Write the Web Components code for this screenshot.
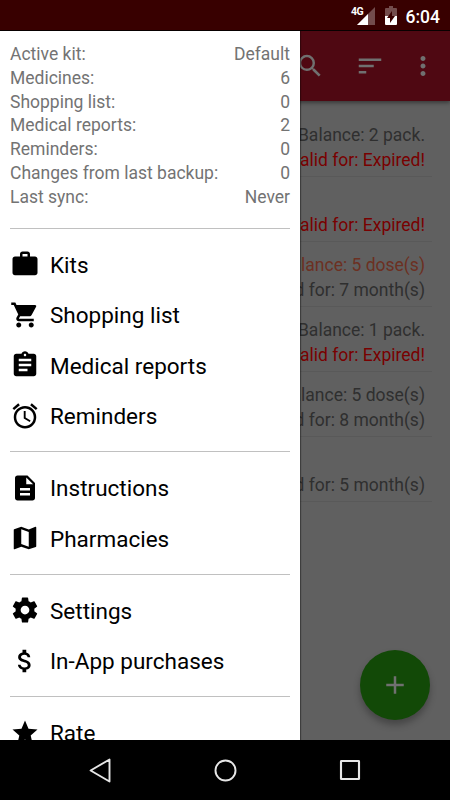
<!DOCTYPE html>
<html lang="en">
<head>
<meta charset="utf-8">
<title>Medicine kit</title>
<style>
html,body{margin:0;height:100%;background:#606060}
body{font-family:Roboto,"Noto Sans",sans-serif;overflow:hidden}
</style>
</head>
<body>
<kit-app></kit-app>
<script>
const ICONS={
work:'<path d="M20 6h-4V4c0-1.11-.89-2-2-2h-4c-1.11 0-2 .89-2 2v2H4c-1.11 0-1.99.89-1.99 2L2 19c0 1.11.89 2 2 2h16c1.11 0 2-.89 2-2V8c0-1.11-.89-2-2-2zm-6 0h-4V4h4v2z"/>',
cart:'<path d="M7 18c-1.1 0-1.99.9-1.99 2S5.9 22 7 22s2-.9 2-2-.9-2-2-2zM1 2v2h2l3.6 7.59-1.35 2.45c-.16.28-.25.61-.25.96 0 1.1.9 2 2 2h12v-2H7.42c-.14 0-.25-.11-.25-.25l.03-.12.9-1.63h7.45c.75 0 1.41-.41 1.75-1.03l3.58-6.49A1.003 1.003 0 0 0 20 4H5.21l-.94-2H1zm16 16c-1.1 0-1.99.9-1.99 2s.89 2 1.99 2 2-.9 2-2-.9-2-2-2z"/>',
clipboard:'<path d="M19 3h-4.18C14.4 1.84 13.3 1 12 1c-1.3 0-2.4.84-2.82 2H5c-1.1 0-2 .9-2 2v14c0 1.1.9 2 2 2h14c1.1 0 2-.9 2-2V5c0-1.1-.9-2-2-2zm-7 0c.55 0 1 .45 1 1s-.45 1-1 1-1-.45-1-1 .45-1 1-1zm2 14H7v-2h7v2zm3-4H7v-2h10v2zm0-4H7V7h10v2z"/>',
alarm:'<path d="M22 5.72l-4.6-3.86-1.29 1.53 4.6 3.86L22 5.72zM7.88 3.39L6.6 1.86 2 5.71l1.29 1.53 4.59-3.85zM12.5 8H11v6l4.75 2.85.75-1.23-4-2.37V8zM12 4c-4.97 0-9 4.03-9 9s4.02 9 9 9a9 9 0 0 0 0-18zm0 16c-3.87 0-7-3.13-7-7s3.13-7 7-7 7 3.13 7 7-3.13 7-7 7z"/>',
doc:'<path d="M14 2H6c-1.1 0-1.99.9-1.99 2L4 20c0 1.1.89 2 1.99 2H18c1.1 0 2-.9 2-2V8l-6-6zm2 16H8v-2h8v2zm0-4H8v-2h8v2zm-3-5V3.5L18.5 9H13z"/>',
map:'<path d="M20.5 3l-.16.03L15 5.1 9 3 3.36 4.9c-.21.07-.36.25-.36.48V20.5c0 .28.22.5.5.5l.16-.03L9 18.9l6 2.1 5.64-1.9c.21-.07.36-.25.36-.48V3.5c0-.28-.22-.5-.5-.5zM15 19l-6-2.11V5l6 2.11V19z"/>',
gear:'<path d="M19.43 12.98c.04-.32.07-.64.07-.98s-.03-.66-.07-.98l2.11-1.65c.19-.15.24-.42.12-.64l-2-3.46c-.12-.22-.39-.3-.61-.22l-2.49 1c-.52-.4-1.08-.73-1.69-.98l-.38-2.65C14.46 2.18 14.25 2 14 2h-4c-.25 0-.46.18-.49.42l-.38 2.65c-.61.25-1.17.59-1.69.98l-2.49-1c-.23-.09-.49 0-.61.22l-2 3.46c-.13.22-.07.49.12.64l2.11 1.65c-.04.32-.07.65-.07.98s.03.66.07.98l-2.11 1.65c-.19.15-.24.42-.12.64l2 3.46c.12.22.39.3.61.22l2.49-1c.52.4 1.08.73 1.69.98l.38 2.65c.03.24.24.42.49.42h4c.25 0 .46-.18.49-.42l.38-2.65c.61-.25 1.17-.59 1.69-.98l2.49 1c.23.09.49 0 .61-.22l2-3.46c.12-.22.07-.49-.12-.64l-2.11-1.65zM12 15.5c-1.93 0-3.5-1.57-3.5-3.5s1.57-3.5 3.5-3.5 3.5 1.57 3.5 3.5-1.57 3.5-3.5 3.5z"/>',
dollar:'<path d="M11.8 10.9c-2.27-.59-3-1.2-3-2.15 0-1.09 1.01-1.85 2.7-1.85 1.78 0 2.44.85 2.5 2.1h2.21c-.07-1.72-1.12-3.3-3.21-3.81V3h-3v2.16c-1.94.42-3.5 1.68-3.5 3.61 0 2.31 1.91 3.46 4.7 4.13 2.5.6 3 1.48 3 2.41 0 .69-.49 1.79-2.7 1.79-2.06 0-2.87-.92-2.98-2.1h-2.2c.12 2.19 1.76 3.42 3.68 3.83V21h3v-2.15c1.95-.37 3.5-1.5 3.5-3.55 0-2.84-2.43-3.81-4.7-4.4z"/>',
star:'<path d="M12 17.27L18.18 21l-1.64-7.03L22 9.24l-7.19-.61L12 2 9.19 8.63 2 9.24l5.46 4.73L5.82 21z"/>',
search:'<path d="M15.5 14h-.79l-.28-.27A6.471 6.471 0 0 0 16 9.5 6.5 6.5 0 1 0 9.5 16c1.61 0 3.09-.59 4.23-1.57l.27.28v.79l5 4.99L20.49 19l-4.99-5zm-6 0C7.01 14 5 11.99 5 9.5S7.01 5 9.5 5 14 7.01 14 9.5 11.99 14 9.5 14z"/>',
sort:'<path d="M3 18h6v-2H3v2zM3 6v2h18V6H3zm0 7h12v-2H3v2z"/>',
more:'<path d="M12 8c1.1 0 2-.9 2-2s-.9-2-2-2-2 .9-2 2 .9 2 2 2zm0 2c-1.1 0-2 .9-2 2s.9 2 2 2 2-.9 2-2-.9-2-2-2zm0 6c-1.1 0-2 .9-2 2s.9 2 2 2 2-.9 2-2-.9-2-2-2z"/>',
plus:'<path d="M11 5h2v6h6v2h-6v6h-2v-6H5v-2h6z"/>',
back:'<path d="M20 2.2v19.6L3.2 12z" fill="none" stroke="currentColor" stroke-width="1.7" stroke-linejoin="round"/>',
home:'<circle cx="12" cy="12" r="8.9" fill="none" stroke="currentColor" stroke-width="1.7"/>',
recent:'<rect x="4.8" y="4.8" width="14.4" height="14.4" rx=".3" fill="none" stroke="currentColor" stroke-width="1.7"/>'
};
function define(name,css,html){
  customElements.define(name,class extends HTMLElement{
    connectedCallback(){
      if(this.shadowRoot)return;
      const root=this.attachShadow({mode:'open'});
      root.innerHTML='<style>*{box-sizing:border-box}'+css+'</style>'+(typeof html==='function'?html(this):html);
    }
  });
}
define('kit-icon',':host{display:block;flex:none;width:var(--size,30px);height:var(--size,30px)}svg{display:block;width:100%;height:100%;fill:currentColor}',
  el=>'<svg viewBox="0 0 24 24">'+ICONS[el.getAttribute('name')]+'</svg>');
define('status-bar',`:host{display:flex;flex:none;height:31px;box-sizing:border-box;background:#380000;border-bottom:1px solid #080000;color:#fff;justify-content:flex-end;align-items:flex-start;padding-right:10px}
svg{display:block}.net{font:bold 10.5px/10px Roboto,sans-serif;margin:7px -6.5px 0 0;letter-spacing:-.6px;position:relative;z-index:1}
.sig{margin:7px 10px 0 0}.bat{margin:6px 9px 0 0}.time{font:500 17.5px/20px Roboto,sans-serif;margin-top:7px}`,
`<span class="net">4G</span>
<svg class="sig" width="18" height="18"><path d="M18 0V18H0z" fill="#734c4c"/><path d="M11 7V18H0z" fill="#fff"/></svg>
<svg class="bat" width="12" height="19"><path d="M4 0h4v2h3q1 0 1 1v7H0V3q0-1 1-1h3z" fill="#734c4c"/><path d="M0 10h12v8q0 1-1 1H1q-1 0-1-1z" fill="#fff"/><path d="M7 5v5h3l-5 7v-5H2z" fill="#380000"/></svg>
<span class="time">6:04</span>`);
define('app-toolbar',`:host{display:flex;height:70px;box-sizing:border-box;background:#4f0812;color:#707070;align-items:center;justify-content:flex-end;padding-right:12.5px;box-shadow:0 2px 4px rgba(0,0,0,.4)}
.a{margin-right:30px}.b{margin-right:22.5px}`,
`<kit-icon class="a" name="search"></kit-icon><kit-icon class="b" name="sort"></kit-icon><kit-icon name="more"></kit-icon>`);
define('stock-row',`:host{display:flex;flex-direction:column;justify-content:flex-end;box-sizing:border-box;height:65px;margin:0 18.5px 0 20px;padding:0 6.5px 3px 0;border-bottom:1px solid #595959;text-align:right;font-size:17.5px;line-height:25px;color:#2f2f2f;white-space:nowrap}
::slotted(.bad){color:#790000}::slotted(.low){color:#6c3022}::slotted(*){display:block}`,'<slot></slot>');
define('info-row',':host{display:flex;justify-content:space-between;font-size:17.5px;line-height:23.75px;color:#737373}',
  '<span><slot></slot></span><span><slot name="value"></slot></span>');
define('menu-item',':host{display:flex;align-items:center;height:50.6px;color:#000;font-size:22.5px;line-height:30px;gap:10px}kit-icon{margin-top:-4px}span{margin-top:-3px}',
  el=>'<kit-icon name="'+el.getAttribute('icon')+'"></kit-icon><span><slot></slot></span>');
define('menu-group',':host{display:block;border-top:1px solid #c0c0c0;padding:12px 0 8.3px}','<slot></slot>');
define('side-drawer',':host{display:block;box-sizing:border-box;background:#fff;overflow:hidden;padding:12.2px 10px 0}.info{padding-bottom:18.3px}',
  '<div class="info"><slot name="info"></slot></div><slot></slot>');
define('add-button',':host{display:flex;align-items:center;justify-content:center;width:70px;height:70px;border-radius:50%;background:#124907;color:#707070;box-shadow:0 5px 7px rgba(0,0,0,.28)}',
  '<kit-icon name="plus"></kit-icon>');
define('nav-bar',':host{display:grid;flex:none;height:60px;grid-template-columns:repeat(3,125px);justify-content:center;align-items:center;justify-items:center;background:#000;color:#e6e6e6}kit-icon{--size:27px}.r{--size:30px}',
  '<kit-icon name="back"></kit-icon><kit-icon name="home"></kit-icon><kit-icon class="r" name="recent"></kit-icon>');
define('kit-app',`:host{display:flex;flex-direction:column;width:450px;height:800px;overflow:hidden}
main{display:grid;grid-template-columns:300px 150px;height:709px;overflow:hidden;position:relative}
.page{grid-area:1/1/2/3;background:#606060;min-width:0}side-drawer{grid-area:1/1;z-index:1;height:709px;box-shadow:1px 0 1px rgba(0,0,0,.35)}
.list{padding-top:10.5px}add-button{position:absolute;right:20px;bottom:20px}`,
`<status-bar></status-bar>
<main><div class="page"><app-toolbar></app-toolbar><div class="list">
<stock-row><span>Balance: 2 pack.</span><span class="bad">Valid for: Expired!</span></stock-row>
<stock-row><span class="bad">Valid for: Expired!</span></stock-row>
<stock-row><span class="low">Balance: 5 dose(s)</span><span>Valid for: 7 month(s)</span></stock-row>
<stock-row><span>Balance: 1 pack.</span><span class="bad">Valid for: Expired!</span></stock-row>
<stock-row><span>Balance: 5 dose(s)</span><span>Valid for: 8 month(s)</span></stock-row>
<stock-row><span>Valid for: 5 month(s)</span></stock-row>
</div></div>
<side-drawer>
<div slot="info">
<info-row>Active kit:<span slot="value">Default</span></info-row>
<info-row>Medicines:<span slot="value">6</span></info-row>
<info-row>Shopping list:<span slot="value">0</span></info-row>
<info-row>Medical reports:<span slot="value">2</span></info-row>
<info-row>Reminders:<span slot="value">0</span></info-row>
<info-row>Changes from last backup:<span slot="value">0</span></info-row>
<info-row>Last sync:<span slot="value">Never</span></info-row>
</div>
<menu-group><menu-item icon="work">Kits</menu-item><menu-item icon="cart">Shopping list</menu-item><menu-item icon="clipboard">Medical reports</menu-item><menu-item icon="alarm">Reminders</menu-item></menu-group>
<menu-group><menu-item icon="doc">Instructions</menu-item><menu-item icon="map">Pharmacies</menu-item></menu-group>
<menu-group><menu-item icon="gear">Settings</menu-item><menu-item icon="dollar">In-App purchases</menu-item></menu-group>
<menu-group><menu-item icon="star">Rate</menu-item></menu-group>
</side-drawer>
<add-button></add-button></main>
<nav-bar></nav-bar>`);
</script>
</body>
</html>
